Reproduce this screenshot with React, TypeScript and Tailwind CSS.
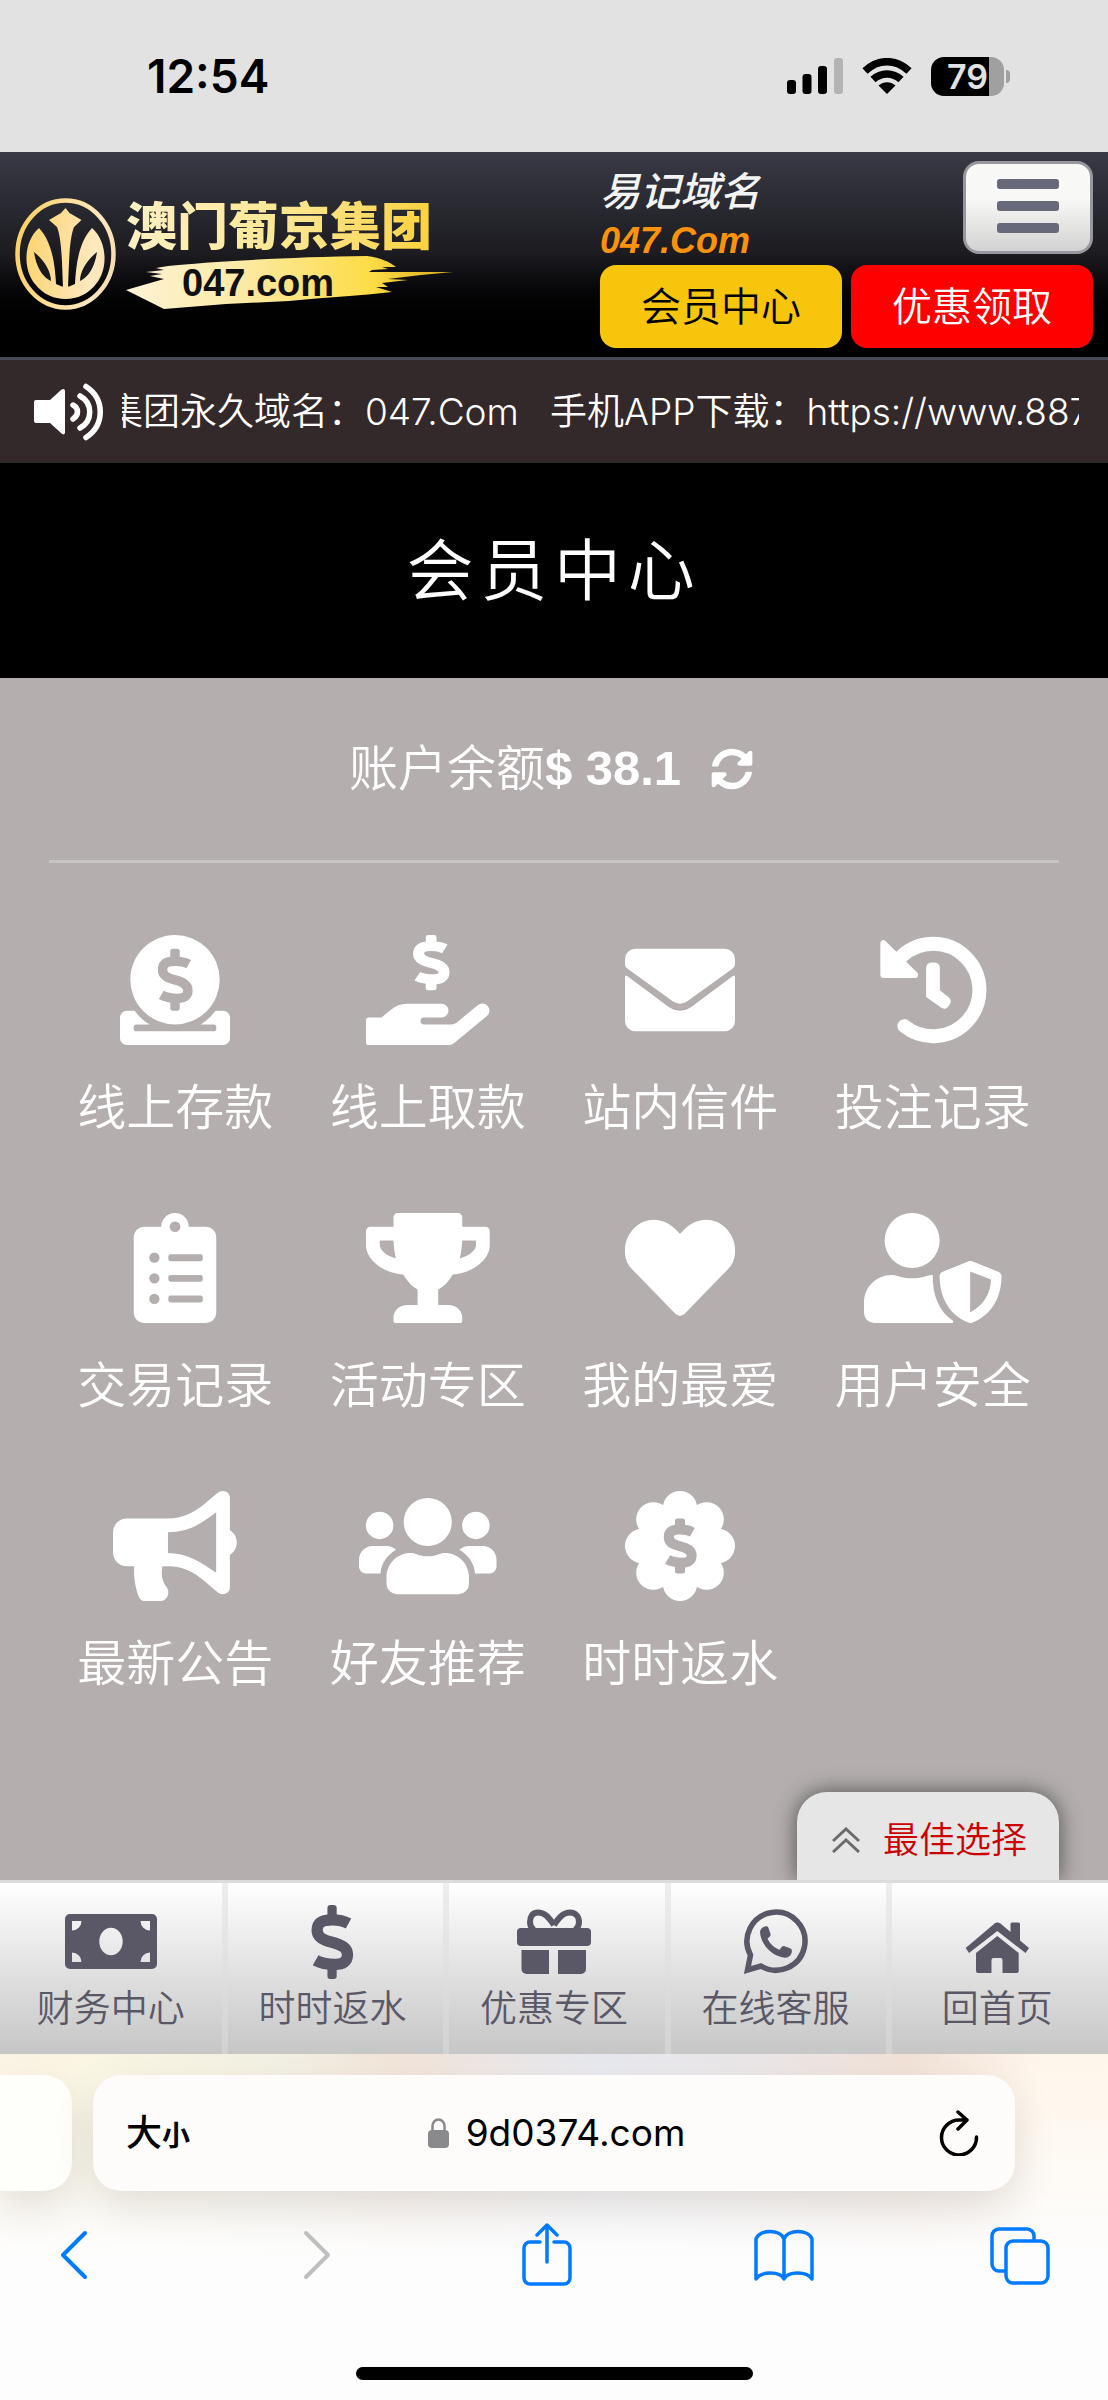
import type {ReactElement, ReactNode} from "react";
import {FaSyncAlt} from "react-icons/fa";

function Dollar({stroke = 44, bar = 44, transform}: {stroke?: number; bar?: number; transform?: string}): ReactElement {
    return (
        <g transform={transform}>
            <path d="M144 72C124 61 106 58 80 58C38 58 22 72 22 98C22 126 46 136 80 145C120 156 140 168 140 194C140 220 122 231 92 231C64 231 42 230 16 215" fill="none" stroke="currentColor" strokeWidth={stroke} />
            <rect x={80 - bar / 2} y="0" width={bar} height="66" rx="12" fill="currentColor" />
            <rect x={80 - bar / 2} y="222" width={bar} height="66" rx="12" fill="currentColor" />
        </g>
    );
}

const menuItems: {label: string; width: number; icon: ReactNode}[] = [
    {
        label: "线上存款",
        width: 512,
        icon: (
            <>
                <circle cx="256" cy="208" r="208" />
                <path d="M32 352h36c18 26 41 48 69 64H76a12 12 0 0 0-12 12v8a12 12 0 0 0 12 12h360a12 12 0 0 0 12-12v-8a12 12 0 0 0-12-12h-60c27-16 50-38 68-64h36a32 32 0 0 1 32 32v96a32 32 0 0 1-32 32H32a32 32 0 0 1-32-32v-96a32 32 0 0 1 32-32z" />
                <g className="text-[#b4aeae]"><Dollar transform="translate(176 64)" /></g>
            </>
        ),
    },
    {
        label: "线上取款",
        width: 576,
        icon: (
            <>
                <Dollar transform="translate(223 0) scale(1 .893)" stroke={52} bar={50} />
                <path d="M12 384h60l44-36c21-18 47-28 74-28h162a32 32 0 0 1 0 64h-82a16 16 0 0 0 0 32h126c11 0 20-4 28-10l96-79a32 32 0 0 1 43 50l-151 124c-9 7-20 11-31 11H12a12 12 0 0 1-12-12V396a12 12 0 0 1 12-12z" />
            </>
        ),
    },
    {
        label: "站内信件",
        width: 512,
        icon: (
            <>
                <path d="M48 64h416a48 48 0 0 1 48 48v24c0 8-5 16-12 21L298 303c-12 9-25 17-42 17s-30-8-42-17L12 157C5 152 0 144 0 136v-24a48 48 0 0 1 48-48z" />
                <path d="M0 196c0-6 7-8 12-4l182 136c18 14 38 24 62 24s44-10 62-24l182-136c5-4 12-2 12 4v204a48 48 0 0 1-48 48H48a48 48 0 0 1-48-48z" />
            </>
        ),
    },
    {
        label: "投注记录",
        width: 512,
        icon: (
            <>
                <path d="M109 100A215 215 0 1 1 123 424" fill="none" stroke="currentColor" strokeWidth="65" strokeLinecap="round" />
                <path d="M25 38v148h148z" stroke="currentColor" strokeWidth="28" strokeLinejoin="round" />
                <path d="M224 152a24 24 0 0 1 24-24h16a24 24 0 0 1 24 24v105l42 34c10 8 12 22 4 32l-9 12c-8 10-22 11-32 3l-69-50z" />
            </>
        ),
    },
    {
        label: "交易记录",
        width: 512,
        icon: (
            <>
                <circle cx="256" cy="64" r="64" />
                <rect x="64" y="64" width="384" height="448" rx="48" />
                <g className="fill-[#b4aeae]">
                    <circle cx="256" cy="64" r="25" />
                    <circle cx="160" cy="208" r="24" />
                    <circle cx="160" cy="304" r="24" />
                    <circle cx="160" cy="400" r="24" />
                    <rect x="225" y="192" width="160" height="32" rx="10" />
                    <rect x="225" y="288" width="160" height="32" rx="10" />
                    <rect x="225" y="384" width="160" height="32" rx="10" />
                </g>
            </>
        ),
    },
    {
        label: "活动专区",
        width: 576,
        icon: (
            <path fillRule="evenodd" d="M148 0h280a20 20 0 0 1 20 20v44h108a20 20 0 0 1 20 20v66c0 68-80 130-172 136-18 30-38 54-68 70v72h48c35 0 64 26 64 56v16a12 12 0 0 1-12 12H140a12 12 0 0 1-12-12v-16c0-30 29-56 64-56h48v-72c-29-16-48-40-67-70C81 280 0 218 0 150V84a20 20 0 0 1 20-20h108V20a20 20 0 0 1 20-20zM64 128v22c0 22 32 50 75 61-6-27-10-54-11-83zM512 128v22c0 22-32 50-75 61 6-27 10-54 11-83z" />
        ),
    },
    {
        label: "我的最爱",
        width: 512,
        icon: (
            <path d="M256 97l-18-18C181 18 96 17 43 70C-14 128-14 218 35 264L231 466c14 16 36 16 50 0L477 264C526 218 526 128 469 70C416 17 331 18 274 79z" />
        ),
    },
    {
        label: "用户安全",
        width: 640,
        icon: (
            <>
                <circle cx="224" cy="128" r="128" />
                <path d="M128 288c10 0 19 2 28 5 22 7 44 11 68 11s46-4 68-11c9-3 17-5 28-5c-2 90 26 166 94 214c4 4 2 10-4 10H48a48 48 0 0 1-48-48v-48C0 345 57 288 128 288z" />
                <path fillRule="evenodd" d="M485 226c7-3 14-3 21 0l119 48c8 3 15 11 15 20c0 98-46 180-134 216c-7 3-14 3-21 0c-88-36-133-118-133-216c0-9 6-17 14-20zM494 272v191c62-32 96-88 97-153z" />
            </>
        ),
    },
    {
        label: "最新公告",
        width: 576,
        icon: (
            <path fillRule="evenodd" d="M64 128h192c66 0 120-26 168-66l64-54c22-17 56-6 56 24v151c20 11 32 32 32 57s-12 46-32 57v151c0 30-34 41-56 24l-64-54c-48-42-100-68-166-68h-28c-8 44 0 72 20 98c18 24 2 64-26 64h-78c-12 0-20-6-25-17C106 455 95 410 99 350H64a64 64 0 0 1-64-64V192a64 64 0 0 1 64-64zM256 192v96c85 0 150 40 224 92V99c-80 63-140 93-224 93z" />
        ),
    },
    {
        label: "好友推荐",
        width: 640,
        icon: (
            <>
                <circle cx="320" cy="144" r="112" />
                <circle cx="96" cy="160" r="64" />
                <circle cx="544" cy="160" r="64" />
                <path d="M240 288c10 0 18 2 26 5 16 6 34 11 54 11s38-5 54-11c8-3 16-5 26-5c62 0 112 50 112 112v32a48 48 0 0 1-48 48H176a48 48 0 0 1-48-48v-32c0-62 50-112 112-112z" />
                <path d="M64 256h64c18 0 33 7 45 18c-42 24-69 62-73 110H32a32 32 0 0 1-32-32v-32a64 64 0 0 1 64-64z" />
                <path d="M576 256h-64c-18 0-33 7-45 18c42 24 69 62 73 110h68a32 32 0 0 0 32-32v-32a64 64 0 0 0-64-64z" />
            </>
        ),
    },
    {
        label: "时时返水",
        width: 512,
        icon: (
            <>
                <circle cx="256" cy="256" r="180" />
                <circle cx="256" cy="80" r="80" />
                <circle cx="380" cy="132" r="80" />
                <circle cx="432" cy="256" r="80" />
                <circle cx="380" cy="380" r="80" />
                <circle cx="256" cy="432" r="80" />
                <circle cx="132" cy="380" r="80" />
                <circle cx="80" cy="256" r="80" />
                <circle cx="132" cy="132" r="80" />
                <g className="text-[#b4aeae]"><Dollar transform="translate(184 128) scale(.9 .889)" stroke={52} bar={52} /></g>
            </>
        ),
    },
];

const navItems: {label: string; icon: ReactNode}[] = [
    {
        label: "财务中心",
        icon: (
            <path fillRule="evenodd" d="M5 9h82a5 5 0 0 1 5 5v45a5 5 0 0 1-5 5H5a5 5 0 0 1-5-5V14a5 5 0 0 1 5-5zM7 16v9.500a9.500 9.500 0 0 0 9.500-9.500zM85 16v9.500a9.500 9.500 0 0 1-9.500-9.500zM7 57v-9.500a9.500 9.500 0 0 1 9.500 9.500zM85 57v-9.500a9.500 9.500 0 0 0-9.500 9.500zM34.300 36.500a11.700 13.700 0 1 0 23.400 0a11.700 13.700 0 1 0-23.400 0z" />
        ),
    },
    {
        label: "时时返水",
        icon: <Dollar transform="translate(25.500 0) scale(.257)" bar={36} />,
    },
    {
        label: "优惠专区",
        icon: (
            <>
                <rect x="9" y="23" width="74" height="18" rx="4" />
                <path d="M13.500 45H41v24H18.500a5 5 0 0 1-5-5zM50 45h28v19a5 5 0 0 1-5 5H50z" />
                <path d="M46 20C40 11 36 7.500 30 7.500C24 7.500 22 12 22 17C22 20 23 23 26 25M46 20C52 11 56 7.500 62 7.500C68 7.500 71 12 71 17C71 20 70 23 67 25" fill="none" stroke="currentColor" strokeWidth="6" />
            </>
        ),
    },
    {
        label: "在线客服",
        icon: (
            <>
                <path d="M20.500 50A29 29 0 1 1 31 61L17.500 65z" fill="none" stroke="currentColor" strokeWidth="5.500" />
                <path d="M30 27c0-3 3-5 5-5.500c2-.5 3 0 3.500 1.500l2 6c.4 1 0 2-1 2.700l-2 2c3 6 7 9 12 11l2-2.500c1-1 2-1.300 3-1l5.500 2c2 1 2 2 1.800 3.500c-.5 4-4 6-7 6c-13-1-24-13-24.800-25.700z" />
            </>
        ),
    },
    {
        label: "回首页",
        icon: (
            <>
                <path d="M43 19c2-2 5-2 7 0l9.500 8v-8a1.500 1.500 0 0 1 1.500-1.500h6.500a1.500 1.500 0 0 1 1.500 1.500v16.500l9 7.500-3.500 5L46.300 26 18 48l-3.300-5z" />
                <path d="M46.300 31L67.700 48v18a2 2 0 0 1-2 2H51.500V55a2 2 0 0 0-2-2h-7a2 2 0 0 0-2 2v13H27a2 2 0 0 1-2-2V48z" />
            </>
        ),
    },
];

function StatusBar(): ReactElement {
    return (
        <div className="flex h-[152px] items-center justify-between bg-[#e2e2e2] pr-[98px] pl-[147px] text-black">
            <span className="text-[46px] leading-[56px] font-semibold">12:54</span>
            <div className="flex items-center gap-[19px]">
                <svg className="h-9 w-14" viewBox="0 0 56 36">
                    <rect x="0" y="22" width="9" height="14" rx="3" />
                    <rect x="15.500" y="16" width="9" height="20" rx="3" />
                    <rect x="31" y="8" width="9" height="28" rx="3" />
                    <rect x="47" y="0" width="9" height="36" rx="3" fill="#b4b4b4" />
                </svg>
                <svg className="h-9 w-[50px]" viewBox="0 0 50 36">
                    <path d="M3 13C16 .5 34 .5 47 13M11 21.500C19 14 31 14 39 21.500" fill="none" stroke="#000" strokeWidth="7.500" />
                    <path d="M25 36l-8.500-8.500c5-4.500 12-4.500 17 0z" />
                </svg>
                <div className="flex items-center gap-[2px]">
                    <div className="flex h-[39px] w-[73px] items-center justify-center rounded-[13px] bg-linear-to-r from-black from-80% to-[#a0a0a0] to-80% text-[34px] font-semibold text-[#e2e2e2]">79</div>
                    <div className="h-[13px] w-1 rounded-r-full bg-[#a0a0a0]" />
                </div>
            </div>
        </div>
    );
}

function Logo(): ReactElement {
    return (
        <a href="#" className="flex gap-[10px] pt-9">
            <svg className="mt-[1px] h-28 w-[101px]" viewBox="0 0 101 112">
                <defs>
                    <linearGradient id="emblem" gradientUnits="userSpaceOnUse" x1="0" y1="40" x2="101" y2="56">
                        <stop offset="0" stopColor="#fbd062" />
                        <stop offset=".8" stopColor="#ffe9c0" />
                        <stop offset="1" stopColor="#f6ddae" />
                    </linearGradient>
                </defs>
                <ellipse cx="50.500" cy="56" rx="48" ry="53.500" fill="none" stroke="url(#emblem)" strokeWidth="4.500" />
                <path fill="url(#emblem)" d="M24 30C8 44 8 72 20 86c15 20 46 20 61 0C93 72 93 44 77 30C64 44 61 66 60 86l-6 2.500H47L41 86C40 66 37 44 24 30z" />
                <path fill="url(#emblem)" d="M50.500 10l4 5 12 7-7.500 7C54 42 54 66 53 90h-5C47 66 47 42 42 29l-8-7 12-7z" />
                <path fill="#1a1a1e" d="M19 54c2 14 8 25 17 29c0-10-7-21-17-29zM82 54c-2 14-8 25-17 29c0-10 7-21 17-29z" />
            </svg>
            <div>
                <div className="bg-linear-to-r from-[#fff0c4] via-[#fbe78f] to-[#fdce1b] bg-clip-text text-[51px] leading-[59px] font-black text-transparent">澳门葡京集团</div>
                <div className="relative flex h-[54px] w-[328px] items-center pl-[56px]">
                    <svg className="absolute inset-0 h-full w-full" viewBox="0 0 328 54">
                        <defs>
                            <linearGradient id="brush">
                                <stop offset="0" stopColor="#fff3d6" />
                                <stop offset=".35" stopColor="#fbeaa6" />
                                <stop offset=".75" stopColor="#fddc45" />
                                <stop offset="1" stopColor="#d9a91c" />
                            </linearGradient>
                        </defs>
                        <path fill="url(#brush)" d="M0 34L38 23L24 20L36 18L20 16L38 14L30 12L42 10C80 6 160 1 241 0C255 2 264 6 270 11L256 11L262 13L246 14L243 16L327 16L295 19L262 23L282 24L256 27L262 31L250 31L266 36C235 40 200 41 163 45L100 48L38 53z" />
                    </svg>
                    <span className="relative font-['Liberation_Sans'] text-[38px] leading-[40px] font-bold text-[#111113]">047.com</span>
                </div>
            </div>
        </a>
    );
}

function Header(): ReactElement {
    return (
        <header className="flex justify-between border-b-[3px] border-[#484a55] bg-linear-to-b from-[#3a3a46] via-[#1b1b20] to-black to-90% pt-[9px] pr-[15px] pb-[9px] pl-[15px]">
            <Logo />
            <div className="w-[493px]">
                <div className="flex items-start justify-between">
                    <div className="pt-[6px] leading-[49px] italic">
                        <div className="text-[40px] font-medium text-[#f4f4f4]">易记域名</div>
                        <div className="font-['Liberation_Sans'] text-4xl leading-[49px] font-bold text-[#fb920c]">047.Com</div>
                    </div>
                    <button type="button" aria-label="菜单" className="flex h-[93px] w-[130px] flex-col items-center justify-center gap-3 rounded-2xl border-[3px] border-[#97989f] bg-linear-to-b from-[#f8f8f6] via-[#f8f8f6] via-40% to-[#d2d2d2] pb-1">
                        <span className="h-[10px] w-[62px] rounded-[3px] bg-[#676879]" />
                        <span className="h-[10px] w-[62px] rounded-[3px] bg-[#676879]" />
                        <span className="h-[10px] w-[62px] rounded-[3px] bg-[#676879]" />
                    </button>
                </div>
                <div className="grid grid-cols-2 gap-[9px] text-[40px] font-[350]">
                    <button type="button" className="h-[83px] rounded-2xl bg-[#f6c50c] text-black">会员中心</button>
                    <button type="button" className="h-[83px] rounded-2xl bg-[#ff0000] text-white">优惠领取</button>
                </div>
            </div>
        </header>
    );
}

function BrowserBar(): ReactElement {
    return (
        <footer className="overflow-hidden bg-[linear-gradient(to_right,#fcf3e2,#faf5df_8%,#f2efe0_25%,#f0e1d5_36%,#e4e6ee_54%,#e8e3e4_68%,#f0ded3_82%,#fff5e8_94%)]">
            <div className="bg-linear-to-b from-white/10 to-[#fdfdfd] to-60% pt-[21px] pb-5">
                <div className="flex gap-[21px]">
                    <div className="h-[116px] w-[72px] rounded-r-[28px] bg-[#fefefb] shadow-[0_16px_40px_rgba(90,70,50,0.15)]" />
                    <div className="mr-[93px] flex h-[116px] flex-1 items-center justify-between rounded-[28px] bg-[#fdfcfa] pr-9 pl-[33px] text-black shadow-[0_16px_40px_rgba(90,70,50,0.15)]">
                        <button type="button" className="w-[72px] pt-1 text-left font-medium whitespace-nowrap">
                            <span className="text-4xl">大</span>
                            <span className="text-[28px] font-bold">小</span>
                        </button>
                        <button type="button" className="flex items-center gap-[17px] text-[37px]">
                            <svg className="h-[30px] w-[21px]" viewBox="0 0 21 30">
                                <rect x="0" y="12" width="21" height="18" rx="4" fill="#8a8a8d" />
                                <path d="M4.500 14V8a6 6.500 0 0 1 12 0v6" fill="none" stroke="#8a8a8d" strokeWidth="2.500" />
                            </svg>
                            9d0374.com
                        </button>
                        <button type="button" aria-label="重新加载" className="flex w-16 justify-end">
                            <svg className="h-[46px] w-10" viewBox="0 0 40 46" fill="none" stroke="#000" strokeWidth="3.500" strokeLinecap="round" strokeLinejoin="round">
                                <path d="M20 10A17.500 17.500 0 1 0 37.500 27M20 10h8M19 2l9 8L19 19" />
                            </svg>
                        </button>
                    </div>
                </div>
                <div className="mt-8 flex justify-between pr-[58px] pl-11 text-[#007aff]">
                    <button type="button" aria-label="后退" className="flex w-[60px] justify-center">
                        <svg className="h-16 w-7" viewBox="0 0 28 64" fill="none" stroke="currentColor" strokeWidth="4" strokeLinecap="round" strokeLinejoin="round">
                            <path d="M25 10L3 32l22 22" />
                        </svg>
                    </button>
                    <button type="button" aria-label="前进" className="flex w-[60px] justify-center pl-3 text-[#bfbfbf]">
                        <svg className="h-16 w-7" viewBox="0 0 28 64" fill="none" stroke="currentColor" strokeWidth="4" strokeLinecap="round" strokeLinejoin="round">
                            <path d="M3 10l22 22L3 54" />
                        </svg>
                    </button>
                    <button type="button" aria-label="分享" className="flex w-[60px] justify-center">
                        <svg className="h-16 w-[50px]" viewBox="0 0 50 64" fill="none" stroke="currentColor" strokeWidth="3.500" strokeLinecap="round" strokeLinejoin="round">
                            <path d="M18 19H8a6 6 0 0 0-6 6v30a6 6 0 0 0 6 6h34a6 6 0 0 0 6-6V25a6 6 0 0 0-6-6H32M25 39V2M15 12L25 2l10 10" />
                        </svg>
                    </button>
                    <button type="button" aria-label="书签" className="flex w-[60px] justify-center">
                        <svg className="h-16 w-[60px]" viewBox="0 0 60 64" fill="none" stroke="currentColor" strokeWidth="3.500" strokeLinejoin="round">
                            <path d="M30 16C26 6 6 6 2 16v40c5-8 24-8 28 0c4-8 23-8 28 0V16C54 6 34 6 30 16zM30 16v40" />
                        </svg>
                    </button>
                    <button type="button" aria-label="标签页" className="flex w-[60px] justify-center">
                        <svg className="h-16 w-[60px]" viewBox="0 0 60 64" fill="none" stroke="currentColor" strokeWidth="3.500" strokeLinecap="round">
                            <rect x="16" y="18" width="42" height="42" rx="7" />
                            <path d="M14 48H9a7 7 0 0 1-7-7V13a7 7 0 0 1 7-7h28a7 7 0 0 1 7 7v3" />
                        </svg>
                    </button>
                </div>
                <div className="mx-auto mt-20 h-[13px] w-[397px] rounded-full bg-black" />
            </div>
        </footer>
    );
}

export default function App(): ReactElement {
    return (
        <div className="w-full font-['Inter','Noto_Sans_CJK_SC',sans-serif]">
            <StatusBar />
            <Header />

            { /* Scrolling announcement */ }
            <div className="flex h-[103px] items-center bg-[#33292a] pr-[29px] pl-[34px] text-white">
                <svg className="h-[58px] w-[70px] shrink-0" viewBox="0 0 70 58" fill="currentColor">
                    <path d="M2 17H16L27 7C29 5 31 6 31 8V49C31 52 29 52 27 50L16 40H2a2 2 0 0 1-2-2V19a2 2 0 0 1 2-2z" />
                    <path d="M39 22C45 25 45 32 39 36M46 13C59 20 59 38 46 45M52 3.500C71 16 71 42 52 54.500" fill="none" stroke="currentColor" strokeWidth="5.500" strokeLinecap="round" />
                </svg>
                <div className="ml-[18px] flex-1 overflow-hidden text-[37px] leading-[56px] font-[350] whitespace-pre">
                    <p className="-indent-4">集团永久域名：047.Com   手机APP下载：https://www.887</p>
                </div>
            </div>

            <div className="flex h-[215px] items-center justify-center bg-black">
                <h1 className="text-[67px] leading-[80px] font-[350] tracking-widest text-white">会员中心</h1>
            </div>

            <main className="bg-[#b4aeae] px-[49px] text-white">
                <div className="flex h-[185px] items-center justify-center border-b-[3px] border-[#c8c4c4] pr-[6px] text-[49px]">
                    <span className="font-[350]">账户余额</span>
                    <b className="font-['Liberation_Sans']">$ 38.1</b>
                    <button type="button" aria-label="刷新余额" className="ml-[30px]">
                        <FaSyncAlt className="h-[42px] w-[42px]" />
                    </button>
                </div>

                <div className="grid grid-cols-4 gap-y-20 pt-[72px]">
                    {menuItems.map((item) => (
                        <a key={item.label} href="#" className="flex flex-col items-center">
                            <svg className="h-[110px] w-auto" viewBox={`0 0 ${item.width} 512`} fill="currentColor">{item.icon}</svg>
                            <span className="mt-[38px] text-[49px] leading-[50px] font-[350]">{item.label}</span>
                        </a>
                    ))}
                </div>

                <div className="mt-[103px] flex justify-end">
                    <button type="button" className="flex h-[88px] w-[262px] items-center justify-end gap-[23px] rounded-t-[30px] bg-[#e6e6e6] pt-2 pr-8 text-4xl text-[#cc0000] shadow-[0_0_22px_rgba(0,0,0,0.55)]">
                        <svg className="h-[26px] w-7" viewBox="0 0 28 26" fill="none" stroke="#6b6b6b" strokeWidth="3">
                            <path d="M1 14L14 2l13 12M1 25l13-12 13 12" />
                        </svg>
                        <span className="leading-[40px] font-[350]">最佳选择</span>
                    </button>
                </div>
            </main>

            <nav className="relative grid grid-cols-5 border-t-[3px] border-[#dcdcdc] bg-linear-to-b from-[#eeeeee] to-[#d2d2d2] text-[#5a5867]">
                {navItems.map((item) => (
                    <a key={item.label} href="#" className="flex flex-col items-center border-l-[6px] border-transparent bg-linear-to-b from-white to-[#c6c6c7] bg-clip-padding pt-[22px] pr-[6px] pb-[25px] first:border-l-0 first:pr-0">
                        <svg className="h-[74px] w-[92px]" viewBox="0 0 92 74" fill="currentColor">{item.icon}</svg>
                        <span className="mt-[10px] text-[37px] leading-[40px] font-[350]">{item.label}</span>
                    </a>
                ))}
            </nav>

            <BrowserBar />
        </div>
    );
}
